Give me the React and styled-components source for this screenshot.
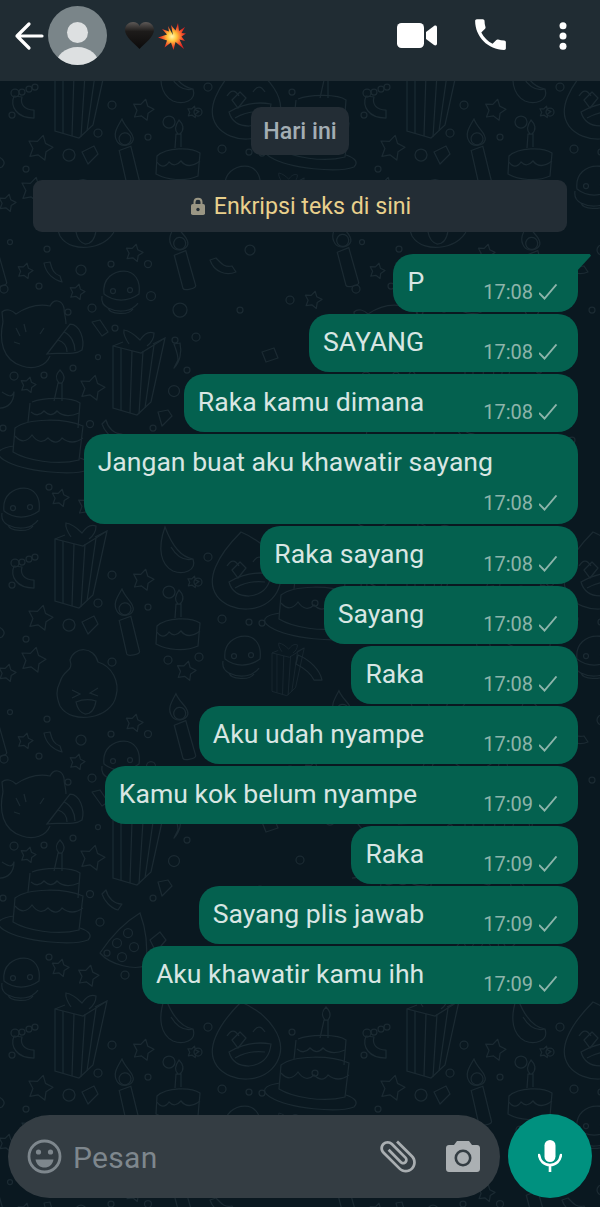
import React from "react";
import styled, { createGlobalStyle } from "styled-components";

const GlobalStyle = createGlobalStyle`
  html, body {
    margin: 0;
    padding: 0;
    background: #fff;
  }
  * {
    box-sizing: border-box;
  }
`;

const Page = styled.div`
  position: relative;
  width: 600px;
  height: 1207px;
  overflow: hidden;
  display: flex;
  flex-direction: column;
  background: #0a1820;
  font-family: Roboto, "Liberation Sans", sans-serif;
`;

const Wallpaper = styled.svg`
  position: absolute;
  inset: 0;
  width: 600px;
  height: 1207px;
`;

const Header = styled.header`
  position: relative;
  flex: none;
  height: 81px;
  display: flex;
  align-items: center;
  padding: 0 33px 10px 14px;
  background: #202c33;
`;

const Avatar = styled.svg`
  width: 59px;
  height: 59px;
  margin-left: 4px;
  flex: none;
`;

const Emojis = styled.div`
  display: flex;
  align-items: center;
  gap: 4px;
  margin-left: 18px;
`;

const Actions = styled.div`
  margin-left: auto;
  display: flex;
  align-items: center;
`;

const Chat = styled.main`
  position: relative;
  flex: 1;
  display: flex;
  flex-direction: column;
  align-items: center;
  padding-top: 26px;
`;

const DayChip = styled.div`
  width: 98px;
  height: 48px;
  display: flex;
  align-items: center;
  justify-content: center;
  border-radius: 10px;
  background: #232d35;
  color: #a3aeb4;
  font-size: 23.2px;
  font-weight: 500;
`;

const Notice = styled.div`
  width: 534px;
  height: 52px;
  margin-top: 25px;
  padding-left: 2px;
  display: flex;
  align-items: center;
  justify-content: center;
  gap: 9px;
  border-radius: 9px;
  background: #232d35;
  color: #e9d08c;
  font-size: 23.2px;
`;

const Messages = styled.div`
  align-self: stretch;
  margin-top: 22px;
  padding-right: 22px;
  display: flex;
  flex-direction: column;
  align-items: flex-end;
  gap: 2px;
`;

const Bubble = styled.div`
  position: relative;
  display: flex;
  flex-direction: ${(p) => (p.$stacked ? "column" : "row")};
  align-items: ${(p) => (p.$stacked ? "stretch" : "flex-start")};
  height: ${(p) => (p.$stacked ? "90px" : "58px")};
  padding: 10px 19px 0 14px;
  border-radius: 20px;
  border-top-right-radius: ${(p) => (p.$tail ? "0" : "20px")};
  background: #04614f;

  ${(p) =>
    p.$tail &&
    `&::after {
      content: "";
      position: absolute;
      top: 0;
      right: -13px;
      width: 14px;
      height: 17px;
      background: #04614f;
      clip-path: polygon(0 0, 92% 0, 100% 10%, 0 100%);
    }`}
`;

const Text = styled.span`
  margin-right: ${(p) => (p.$stacked ? "66px" : "0")};
  color: #d8e6e3;
  font-size: 26.6px;
  line-height: 36px;
  white-space: nowrap;
`;

const Meta = styled.span`
  display: flex;
  align-items: center;
  gap: 6px;
  margin-left: ${(p) => (p.$stacked ? "auto" : `${p.$gap}px`)};
  margin-top: ${(p) => (p.$stacked ? "9px" : "14px")};
  height: 28px;
  color: #8db4aa;
  font-size: 20px;
`;

const Composer = styled.footer`
  position: relative;
  flex: none;
  display: flex;
  align-items: center;
  gap: 8px;
  padding: 0 8px 9px;
`;

const InputBar = styled.div`
  flex: 1;
  height: 83px;
  display: flex;
  align-items: center;
  padding: 0 20px 0 19px;
  border-radius: 42px;
  background: #343d43;
`;

const Placeholder = styled.span`
  margin-left: 11px;
  margin-right: auto;
  margin-top: 2px;
  color: #7e878d;
  font-size: 30px;
  letter-spacing: 0.3px;
`;

const MicButton = styled.div`
  width: 84px;
  height: 84px;
  flex: none;
  display: flex;
  align-items: center;
  justify-content: center;
  border-radius: 50%;
  background: #00917f;
`;

const messages = [
  { text: "P", time: "17:08", gap: 59, tail: true },
  { text: "SAYANG", time: "17:08", gap: 59 },
  { text: "Raka kamu dimana", time: "17:08", gap: 59 },
  { text: "Jangan buat aku khawatir sayang", time: "17:08", stacked: true },
  { text: "Raka sayang", time: "17:08", gap: 59 },
  { text: "Sayang", time: "17:08", gap: 59 },
  { text: "Raka", time: "17:08", gap: 59 },
  { text: "Aku udah nyampe", time: "17:08", gap: 59 },
  { text: "Kamu kok belum nyampe", time: "17:09", gap: 66 },
  { text: "Raka", time: "17:09", gap: 59 },
  { text: "Sayang plis jawab", time: "17:09", gap: 59 },
  { text: "Aku khawatir kamu ihh", time: "17:09", gap: 59 },
];

const Gift = ({ x, y, s = 1 }) => (
  <g transform={`translate(${x} ${y}) scale(${s})`}>
    <path d="M0 16 L0 78 L24 85 L38 72 L52 8 L28 23 Z" />
    <path d="M8 18 L8 80 M19 21 L17 83 M30 21 L26 84 M41 15 L32 78 M0 16 L10 12 M40 14 L52 8" />
    <path d="M16 14 C12 8 10 4 11 0 C17 1 22 5 27 10 C31 4 36 1 41 3 C41 9 38 13 34 16" />
  </g>
);

const Candle = ({ x, y, r = 0 }) => (
  <g transform={`translate(${x} ${y}) rotate(${r})`}>
    <path d="M9 0 C3 8 -2 14 2 22 C5 28 15 28 18 22 C20 15 12 11 9 0 Z" />
    <circle cx="10" cy="20" r="6" />
    <path d="M3 31 L15 28 L20 64 C20 67 8 68 7 65 Z" />
  </g>
);

const BigCake = ({ x, y }) => (
  <g transform={`translate(${x} ${y})`}>
    <path d="M52 31 L56 13 L60 13 L60 31 M57 13 C52 7 55 3 58 0 C62 4 64 8 60 13" />
    <path d="M30 32 C42 27 70 27 78 33 L76 58 M28 33 L26 52 M29 42 Q36 48 42 41 Q49 48 55 41 Q63 49 77 43" />
    <path d="M13 58 C26 48 62 48 81 56 L77 90 C55 96 24 90 11 82 Z" />
    <path d="M13 66 Q22 76 30 65 Q38 76 46 68 Q54 76 60 68 Q70 76 81 68" />
    <path d="M12 76 C-4 78 -8 84 2 90 C22 102 70 106 86 100 C92 94 84 90 78 88" />
  </g>
);

const SmallCake = ({ x, y }) => (
  <g transform={`translate(${x} ${y})`}>
    <path d="M20 28 L21 14 L26 14 L26 27 M23 14 C18 9 21 4 24 0 C28 4 30 9 25 14" />
    <path d="M2 36 C12 27 36 27 45 33 L43 56 C30 62 12 60 1 54 Z" />
    <path d="M2 42 Q8 50 14 42 Q20 48 26 41 Q33 50 45 41" />
  </g>
);

const Burger = ({ x, y }) => (
  <g transform={`translate(${x} ${y})`}>
    <path d="M4 24 C2 8 14 1 24 1 C34 1 41 10 39 24 C28 32 14 32 4 24 Z" />
    <path d="M2 26 C1 32 4 36 8 38 C20 44 32 41 38 33 M8 38 C10 44 28 46 33 39" />
    <circle cx="13" cy="21" r="2.5" />
    <circle cx="30" cy="20" r="2.5" />
  </g>
);

const LaughFace = ({ x, y }) => (
  <g transform={`translate(${x} ${y})`}>
    <path d="M30 0 C6 24 -6 48 6 64 C20 82 54 82 66 60 C78 38 58 12 30 0 Z" />
    <path d="M16 34 Q22 24 28 34 M42 30 Q48 20 54 30" />
    <path d="M18 50 Q38 38 60 42 Q58 62 38 64 Q22 64 18 50 Z M24 56 Q38 48 54 50" />
  </g>
);

const Cat = ({ x, y }) => (
  <g transform={`translate(${x} ${y})`}>
    <path d="M8 36 C12 22 22 26 18 14 C22 0 42 0 46 16 C60 20 68 36 64 50 C60 72 20 80 8 60 C4 50 4 44 8 36 Z" />
    <path d="M20 44 L28 48 L20 52 M46 42 L38 47 L46 50 M24 56 Q34 52 44 55 Q42 68 33 68 Q26 66 24 56 Z" />
  </g>
);

const PartyCat = ({ x, y }) => (
  <g transform={`translate(${x} ${y})`}>
    <path d="M3 22 C-1 40 2 60 22 66 C34 70 46 66 50 56 M3 22 L2 12 C6 8 12 10 16 14 C28 6 40 4 50 6 C54 -2 62 0 64 8 C64 14 66 18 66 24" />
    <path d="M16 28 L20 36 M24 24 L26 32 M14 42 L20 44 M44 28 L40 34" />
    <path d="M47 54 L70 24 C80 24 85 40 82 50 C74 56 60 52 47 54 Z M58 40 C64 42 67 47 67 52 M64 32 C71 35 75 43 75 51" />
  </g>
);

const PartyHat = ({ x, y }) => (
  <g transform={`translate(${x} ${y})`}>
    <path d="M10 0 C16 16 24 30 38 32 C42 44 28 48 18 44 C6 38 2 22 10 0 Z M16 20 C22 30 30 34 38 32" />
  </g>
);

const DottedHat = ({ x, y }) => (
  <g transform={`translate(${x} ${y})`}>
    <path d="M40 0 C20 12 8 28 0 40 C10 52 36 58 46 52 C48 34 46 16 40 0 Z" />
    <circle cx="28" cy="20" r="4.5" />
    <circle cx="17" cy="30" r="4.5" />
    <circle cx="34" cy="34" r="4.5" />
    <circle cx="22" cy="44" r="4.5" />
    <circle cx="7" cy="40" r="3" />
  </g>
);

const starPoints = (x, y, r) => {
  const pts = [];
  for (let i = 0; i < 10; i++) {
    const a = (Math.PI / 5) * i + 0.25;
    const d = i % 2 ? r * 0.55 : r;
    pts.push(`${(x + d * Math.sin(a)).toFixed(1)},${(y - d * Math.cos(a)).toFixed(1)}`);
  }
  return pts.join(" ");
};

const stars = [
  [143, 110, 11], [40, 148, 13], [7, 203, 9], [33, 190, 13], [186, 201, 10],
  [25, 271, 8], [77, 292, 8], [28, 385, 8], [92, 388, 13], [60, 498, 9],
  [88, 506, 11], [134, 253, 9], [193, 112, 6], [313, 300, 9],
];

const rings = [
  [22, 92, 3], [35, 87, 3], [112, 105, 4], [12, 115, 3], [98, 133, 4], [148, 137, 3],
  [69, 155, 6], [222, 149, 4], [249, 152, 3], [26, 169, 3], [208, 87, 4], [292, 92, 3],
  [198, 112, 4], [10, 242, 2.5], [47, 249, 3], [81, 270, 5], [39, 286, 3], [4, 289, 4],
  [111, 264, 3], [148, 264, 3.5], [151, 296, 4.5], [92, 308, 4], [68, 312, 3], [115, 328, 3],
  [196, 337, 4], [175, 340, 3], [180, 310, 7], [98, 357, 2.5], [73, 368, 3], [14, 376, 4],
  [44, 375, 3], [174, 391, 5.5], [187, 370, 3], [90, 424, 3.5], [153, 428, 3], [3, 428, 3],
  [100, 452, 4], [125, 35, 4], [49, 17, 3], [15, 93, 4], [29, 89, 3], [169, 122, 6],
  [168, 190, 4], [199, 187, 4], [112, 192, 4], [262, 153, 3], [315, 133, 3], [250, 250, 5],
  [290, 300, 4], [240, 310, 3], [300, 390, 4], [330, 350, 5], [260, 420, 4], [220, 440, 3],
];

const confetti = [
  "M14 96 C10 106 16 118 34 118 L34 110 C24 110 20 104 22 97 Z",
  "M82 152 L94 146 L98 154 L88 164 Z",
  "M44 263 C46 274 54 280 62 282 L60 276 C54 274 52 270 50 262 Z",
  "M92 322 L100 320 L108 332 L102 336 Z",
  "M180 343 C182 352 180 362 174 368 L178 360 C178 354 176 350 174 344 Z",
  "M2 392 C8 396 12 398 14 392 C14 402 8 408 0 408",
  "M106 420 C108 428 114 434 122 434 L118 440 C110 438 104 430 102 424 Z",
  "M158 412 L168 410 L172 416 L162 426 Z",
  "M150 470 L160 462 L166 470 L156 482 Z",
  "M232 100 L240 92 L246 98 L238 108 Z",
  "M298 185 C310 190 320 200 322 210 L314 210 C310 202 304 198 296 194 Z",
  "M210 260 C214 272 226 276 236 272 L232 266 C224 268 220 262 216 258 Z",
  "M262 352 L274 348 L278 358 L266 362 Z",
];

// one repeat of the doodle wallpaper, it repeats every 352 wide and 470 high
const WallpaperTile = () => (
  <g>
    <Gift x={55} y={53} />
    <Gift x={113} y={330} />
    <Gift x={272} y={173} s={0.62} />
    <Candle x={113} y={120} r={-6} />
    <Candle x={167} y={225} r={-8} />
    <Candle x={330} y={222} r={-8} />
    <SmallCake x={155} y={120} />
    <BigCake x={268} y={67} />
    <BigCake x={2} y={370} />
    <LaughFace x={211} y={62} />
    <Cat x={52} y={176} />
    <PartyCat x={0} y={300} />
    <PartyHat x={155} y={57} />
    <Burger x={100} y={270} />
    <Burger x={0} y={17} />
    <Burger x={221} y={165} />
    <DottedHat x={100} y={443} />
    {stars.map(([x, y, r]) => (
      <polygon key={`${x}-${y}`} points={starPoints(x, y, r)} strokeLinejoin="round" />
    ))}
    {rings.map(([x, y, r]) => (
      <circle key={`${x}-${y}`} cx={x} cy={y} r={r} />
    ))}
    {confetti.map((d) => (
      <path key={d} d={d} strokeLinejoin="round" />
    ))}
  </g>
);

const tileX = [-352, 0, 352];
const tileY = [-470, 0, 470, 940];

const Doodles = () => (
  <Wallpaper viewBox="0 0 600 1207">
    <defs>
      <g fill="none" stroke="#1b2a32" strokeWidth="1.25" id="doodles">
        <WallpaperTile />
      </g>
    </defs>
    {tileX.map((x) =>
      tileY.map((y) => <use key={`${x}/${y}`} href="#doodles" x={x} y={y} />)
    )}
  </Wallpaper>
);

const BackIcon = () => (
  <svg width="30" height="30" viewBox="0 0 30 30" style={{ flex: "none" }}>
    <path d="M28 15 H3 M15 3 L3 15 L15 27" fill="none" stroke="#fff" strokeWidth="3.2" strokeLinecap="round" strokeLinejoin="round" />
  </svg>
);

const UserAvatar = () => (
  <Avatar viewBox="0 0 59 59">
    <defs>
      <clipPath id="avatarClip">
        <circle cx="29.5" cy="29.5" r="29.5" />
      </clipPath>
    </defs>
    <circle cx="29.5" cy="29.5" r="29.5" fill="#7a8589" />
    <g clipPath="url(#avatarClip)" fill="#dde0e1">
      <circle cx="29.5" cy="26.5" r="10.5" />
      <ellipse cx="29.5" cy="60" rx="22" ry="19" />
    </g>
  </Avatar>
);

const BlackHeart = () => (
  <svg width="29" height="27" viewBox="0 0 29 27">
    <defs>
      <linearGradient id="heartFill" x1="0" y1="0" x2="0" y2="1">
        <stop offset="0" stopColor="#5d5957" />
        <stop offset="0.35" stopColor="#1d1b1a" />
        <stop offset="1" stopColor="#0c0b0b" />
      </linearGradient>
    </defs>
    <path d="M14.5 27 C9 21 0 15 0 8 C0 3 4 0 8 0 C11 0 13.5 1.5 14.5 4 C15.5 1.5 18 0 21 0 C25 0 29 3 29 8 C29 15 20 21 14.5 27 Z" fill="url(#heartFill)" />
  </svg>
);

const Collision = () => (
  <svg width="30" height="28" viewBox="0 0 30 28">
    <defs>
      <radialGradient id="boom">
        <stop offset="0" stopColor="#fff7b0" />
        <stop offset="0.35" stopColor="#ffc33a" />
        <stop offset="0.7" stopColor="#f4572c" />
        <stop offset="1" stopColor="#dd2222" />
      </radialGradient>
    </defs>
    <polygon
      points="15,13 13,3 17.5,8.5 20,1 21,9 27,5 23.5,11 28,11.5 23.5,14.5 27,19 21.5,17.5 26,27 17.5,20 15.5,28 13,20.5 6.5,25.5 9,18.5 0,15.5 9,12.5 4,7 11,9.5 10,4"
      fill="url(#boom)"
    />
  </svg>
);

const VideoIcon = () => (
  <svg width="40" height="25" viewBox="0 0 40 25" style={{ marginRight: 33 }}>
    <rect x="0" y="0" width="27" height="25" rx="4.5" fill="#fff" />
    <path d="M29 9 L37 3 C38.4 2.1 40 2.7 40 4.5 V20.5 C40 22.3 38.4 22.9 37 22 L29 16 Z" fill="#fff" />
  </svg>
);

const PhoneIcon = () => (
  <svg width="41" height="41" viewBox="0 0 24 24" style={{ marginRight: 48, marginTop: -2 }}>
    <path
      fill="#fff"
      d="M6.62 10.79c1.44 2.83 3.76 5.14 6.59 6.59l2.2-2.2c.27-.27.67-.36 1.02-.24 1.12.37 2.33.57 3.57.57.55 0 1 .45 1 1V20c0 .55-.45 1-1 1-9.39 0-17-7.61-17-17 0-.55.45-1 1-1h3.5c.55 0 1 .45 1 1 0 1.25.2 2.45.57 3.57.11.35.03.74-.25 1.02l-2.2 2.2z"
    />
  </svg>
);

const MoreIcon = () => (
  <svg width="8" height="28" viewBox="0 0 8 28">
    <circle cx="4" cy="3.7" r="3.5" fill="#fff" />
    <circle cx="4" cy="14" r="3.5" fill="#fff" />
    <circle cx="4" cy="24.3" r="3.5" fill="#fff" />
  </svg>
);

const LockIcon = () => (
  <svg width="14" height="18" viewBox="0 0 14 18">
    <path d="M3.5 8 V5 C3.5 0.5 10.5 0.5 10.5 5 V8" fill="none" stroke="#9a9684" strokeWidth="2" />
    <rect x="0" y="7" width="14" height="11" rx="1.8" fill="#9a9684" />
    <circle cx="7" cy="12.5" r="1.7" fill="#232d35" />
  </svg>
);

const CheckIcon = () => (
  <svg width="20" height="16" viewBox="0 0 20 16">
    <path d="M0 9 L5.5 14.5 L17.5 0.5" fill="none" stroke="#8db4aa" strokeWidth="1.9" />
  </svg>
);

const SmileIcon = () => (
  <svg width="35" height="35" viewBox="0 0 35 35" style={{ flex: "none" }}>
    <circle cx="17.5" cy="17.5" r="15.5" fill="none" stroke="#7e878d" strokeWidth="2.8" />
    <circle cx="11.5" cy="13" r="2.6" fill="#7e878d" />
    <circle cx="23.5" cy="13" r="2.6" fill="#7e878d" />
    <path d="M8.5 20.5 H26.5 C25.5 26 22 28.5 17.5 28.5 C13 28.5 9.5 26 8.5 20.5 Z" fill="#7e878d" />
  </svg>
);

const ClipIcon = () => (
  <svg width="44" height="44" viewBox="0 0 24 24" style={{ marginRight: 26 }}>
    <path
      transform="rotate(-45 12 12)"
      fill="#a9aeb1"
      d="M16.5 6v11.5c0 2.21-1.79 4-4 4s-4-1.79-4-4V5c0-1.38 1.12-2.5 2.5-2.5s2.5 1.12 2.5 2.5v10.5c0 .55-.45 1-1 1s-1-.45-1-1V6H10v9.5c0 1.38 1.12 2.5 2.5 2.5s2.5-1.12 2.5-2.5V5c0-2.21-1.79-4-4-4S7 2.79 7 5v12.5c0 3.04 2.46 5.5 5.5 5.5s5.5-2.46 5.5-5.5V6h-1.5z"
    />
  </svg>
);

const CameraIcon = () => (
  <svg width="34" height="31" viewBox="0 0 34 31">
    <path d="M11 0 L8 4 H3 C1.3 4 0 5.3 0 7 V28 C0 29.7 1.3 31 3 31 H31 C32.7 31 34 29.7 34 28 V7 C34 5.3 32.7 4 31 4 H26 L23 0 Z" fill="#abb0b3" />
    <circle cx="17" cy="17" r="7.2" fill="#abb0b3" stroke="#343d43" strokeWidth="2.6" />
  </svg>
);

const MicIcon = () => (
  <svg width="24" height="32" viewBox="0 0 24 32">
    <rect x="6.5" y="0" width="11" height="22" rx="5.5" fill="#fff" />
    <path d="M1 15 C2 21 6 25 12 25 C18 25 22 21 23 15" fill="none" stroke="#fff" strokeWidth="2.6" strokeLinecap="round" />
    <rect x="10.7" y="24" width="2.6" height="8" fill="#fff" />
  </svg>
);

const App = () => {
  return (
    <Page>
      <GlobalStyle />
      <Doodles />
      <Header>
        <BackIcon />
        <UserAvatar />
        <Emojis>
          <BlackHeart />
          <Collision />
        </Emojis>
        <Actions>
          <VideoIcon />
          <PhoneIcon />
          <MoreIcon />
        </Actions>
      </Header>

      <Chat>
        <DayChip>Hari ini</DayChip>
        <Notice>
          <LockIcon />
          Enkripsi teks di sini
        </Notice>
        <Messages>
          {messages.map((m, i) => (
            <Bubble key={i} $stacked={m.stacked} $tail={m.tail}>
              <Text $stacked={m.stacked}>{m.text}</Text>
              <Meta $stacked={m.stacked} $gap={m.gap}>
                {m.time}
                <CheckIcon />
              </Meta>
            </Bubble>
          ))}
        </Messages>
      </Chat>

      <Composer>
        <InputBar>
          <SmileIcon />
          <Placeholder>Pesan</Placeholder>
          <ClipIcon />
          <CameraIcon />
        </InputBar>
        <MicButton>
          <MicIcon />
        </MicButton>
      </Composer>
    </Page>
  );
};

export default App;
